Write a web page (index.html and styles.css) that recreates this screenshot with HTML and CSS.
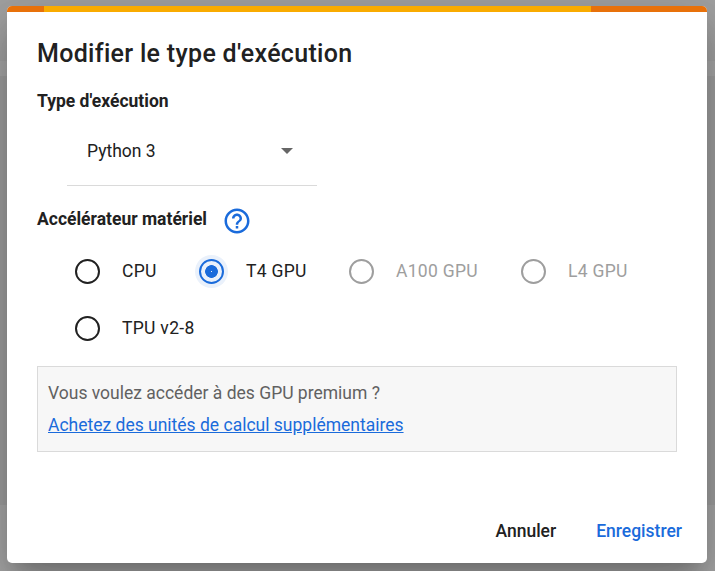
FILE: index.html
```html
<!DOCTYPE html>
<html lang="fr">
<head>
<meta charset="utf-8">
<title>Modifier le type d'exécution</title>
<link rel="stylesheet" href="styles.css">
</head>
<body>
<main class="dialog">
  <div class="progress"><span class="progress-bar"></span></div>
  <div class="content">
    <h1 class="title">Modifier le type d'exécution</h1>
    <h2 class="label">Type d'exécution</h2>
    <div class="select"><span>Python 3</span><svg class="arrow" width="12" height="6" viewBox="0 0 12 6"><path d="M0 0h12L6 6z" fill="currentColor"/></svg></div>
    <div class="heading-row">
      <h2 class="label">Accélérateur matériel</h2>
      <svg class="help" width="30" height="30" viewBox="0 0 24 24"><path fill="currentColor" d="M11 18h2v-2h-2v2zm1-16C6.480 2 2 6.480 2 12s4.480 10 10 10 10-4.480 10-10S17.520 2 12 2zm0 18c-4.410 0-8-3.590-8-8s3.590-8 8-8 8 3.590 8 8-3.590 8-8 8zm0-14c-2.210 0-4 1.790-4 4h2c0-1.100.9-2 2-2s2 .9 2 2c0 2-3 1.750-3 5h2c0-2.250 3-2.500 3-5 0-2.210-1.790-4-4-4z"/></svg>
    </div>
    <div class="options">
      <div class="option"><span class="radio"></span><span class="name">CPU</span></div>
      <div class="option"><span class="radio checked"></span><span class="name">T4 GPU</span></div>
      <div class="option disabled"><span class="radio"></span><span class="name">A100 GPU</span></div>
      <div class="option disabled"><span class="radio"></span><span class="name">L4 GPU</span></div>
      <div class="option"><span class="radio"></span><span class="name">TPU v2-8</span></div>
    </div>
    <div class="notice">
      <p>Vous voulez accéder à des GPU premium ?</p>
      <a>Achetez des unités de calcul supplémentaires</a>
    </div>
    <div class="actions"><span>Annuler</span><span class="primary">Enregistrer</span></div>
  </div>
</main>
</body>
</html>
```
FILE: styles.css
```css
* { box-sizing: border-box; }
body {
  margin: 0;
  height: 571px;
  padding: 6px 8px 8px 7px;
  overflow: hidden;
  font: 400 17.5px/24px Roboto, sans-serif;
  color: #212121;
  background: linear-gradient(#a2a2a2 0 61px, #a8a8a8 61px 76px, #a0a0a0 76px 505px, #a8a8a8 505px);
}
.dialog {
  height: 557px;
  background: #fff;
  border-radius: 5px;
  overflow: hidden;
  box-shadow: 0 14px 19px -9px rgba(0,0,0,.2), 0 30px 48px 4px rgba(0,0,0,.14), 0 11px 58px 10px rgba(0,0,0,.12);
}
.progress { height: 6px; background: #e8710a; }
.progress-bar { display: block; width: 547px; height: 6px; margin-left: 37.400px; background: #f9ab00; }
.content { padding: 26px 30px 0; }
.title { margin: 0; font-size: 25px; line-height: 32px; font-weight: 500; letter-spacing: .31px; }
.label { margin: 0; font-size: 17.5px; line-height: 24px; font-weight: 700; }
.title + .label { margin-top: 19px; }
.select {
  display: flex; align-items: center; justify-content: space-between;
  width: 250px; height: 70px; margin: 3px 0 0 30px; padding: 0 24px 0 20px;
  border-bottom: 1px solid #dadada;
}
.arrow { color: #666; }
.heading-row { display: flex; height: 30px; margin-top: 20px; gap: 14.800px; }
.heading-row .label { padding-top: 1px; }
.help { color: #1a6bdb; }
.options {
  display: grid; grid-template-columns: 124px 150px 172px 130px;
  grid-auto-rows: 57px; margin: 7px 0 0 38px; height: 123px;
  letter-spacing: .3px;
}
.option { display: flex; align-items: center; gap: 22px; height: 57px; }
.name { padding-bottom: 2px; }
.radio { width: 25px; height: 25px; border: 2px solid currentColor; border-radius: 50%; }
.checked { border-color: #1a6bdb; background: radial-gradient(circle, #eaf1fb 0 .6px, #1a6bdb .7px 6px, #eaf1fb 6.7px); box-shadow: 0 0 0 4px #eaf1fb; }
.disabled { color: #9e9e9e; }
.notice { height: 86px; border: 1px solid #dadada; background: #f7f7f7; padding: 10px; line-height: 32px; color: #616161; }
.notice p { margin: 0; }
.notice a { color: #1a6bdb; text-decoration: underline; }
.actions { display: flex; justify-content: flex-end; gap: 40px; margin: 67px -5px 0 0; font-weight: 500; }
.primary { color: #1a6bdb; }
```
